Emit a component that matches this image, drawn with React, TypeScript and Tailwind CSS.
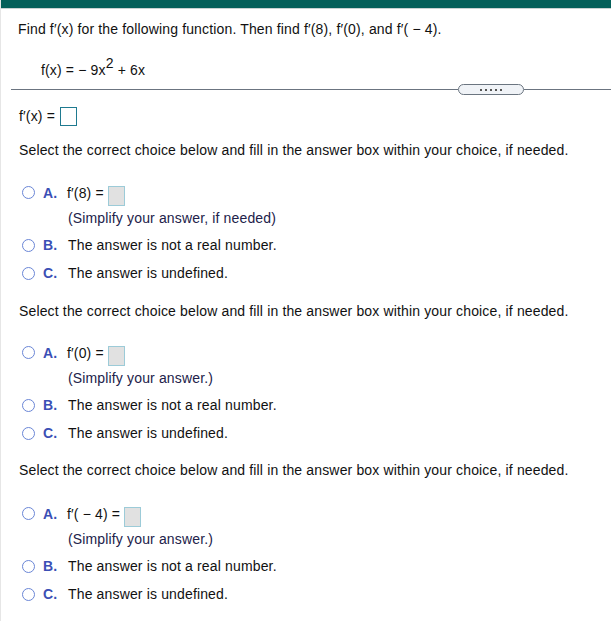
import React from 'react';

// One sub-question: prompt line plus three radio choices
type Part = {
  arg: string;
  hint: string;
  gapTop: string; // space above the prompt
  gapA: string; // space between prompt and choice A
};

const parts: Part[] = [
  { arg: '8', hint: '(Simplify your answer, if needed)', gapTop: 'mt-[15px]', gapA: 'mt-[27px]' },
  { arg: '0', hint: '(Simplify your answer.)', gapTop: 'mt-[22px]', gapA: 'mt-[26px]' },
  { arg: '( − 4)', hint: '(Simplify your answer.)', gapTop: 'mt-[21px]', gapA: 'mt-[28px]' },
];

function Radio() {
  return <span className="block w-[13px] h-[13px] rounded-full border-[1.5px] border-[#6a86d6] bg-white shrink-0" />;
}

function Choice({ letter, text }: { letter: string; text: string }) {
  return (
    <div className="flex items-center h-[16px] pl-[21px]">
      <Radio />
      <span className="ml-[8px] w-[25px] font-bold text-[#3b4fb5]">{letter}</span>
      <span>{text}</span>
    </div>
  );
}

function Question({ part }: { part: Part }) {
  const isParen = part.arg.startsWith('(');
  return (
    <>
      <div className={`${part.gapTop} h-[16px] pl-[18px]`}>
        Select the correct choice below and fill in the answer box within your choice, if needed.
      </div>

      {/* choice A with answer box */}
      <div className={`${part.gapA} flex items-start h-[21px] pl-[21px]`}>
        <span className="mt-[1px]">
          <Radio />
        </span>
        <span className="ml-[8px] w-[24px] font-bold text-[#3b4fb5]">A.</span>
        <span className="whitespace-pre">
          f′{isParen ? part.arg : `(${part.arg})`} =
        </span>
        <span className="ml-[4px] mt-[1px] block w-[17px] h-[20px] bg-[#e1e1e1] border border-[#9ccbd8]" />
      </div>
      <div className="mt-[4px] h-[16px] pl-[67px] text-[#22224a]">{part.hint}</div>

      <div className="mt-[11px]">
        <Choice letter="B." text="The answer is not a real number." />
      </div>
      <div className="mt-[12px]">
        <Choice letter="C." text="The answer is undefined." />
      </div>
    </>
  );
}

export default function App() {
  return (
    <div
      className="w-[611px] h-[621px] bg-white text-[14px] tracking-[0.15px] leading-[16px] text-[#111] border-l border-[#e6e6e6] overflow-hidden"
      style={{ fontFamily: '"Liberation Sans", Arial, sans-serif' }}
    >
      <div className="h-[8px] bg-[#04605a]" />
      <div className="h-[1px] bg-[#c9d2d2]" />

      <div className="h-[40px] flex items-center pl-[17px]">
        Find f′(x) for the following function. Then find f′(8), f′(0), and f′( − 4).
      </div>

      <div className="pt-[13px] h-[29px] pl-[40px] whitespace-pre">
        f(x) = − 9x<span className="relative -top-[7px] leading-none">2</span> + 6x
      </div>

      {/* divider with collapse handle */}
      <div className="mt-[6px] h-[11px] flex items-center pl-[10px]">
        <div className="w-[447px] h-[1px] bg-[#6b7480]" />
        <div className="w-[66px] h-[11px] rounded-full border border-[#6b7580] bg-[#f0f3f7] flex items-center justify-center gap-[3px]">
          <span className="w-[2px] h-[2px] bg-[#555]" />
          <span className="w-[2px] h-[2px] bg-[#555]" />
          <span className="w-[2px] h-[2px] bg-[#555]" />
          <span className="w-[2px] h-[2px] bg-[#555]" />
          <span className="w-[2px] h-[2px] bg-[#555]" />
        </div>
        <div className="flex-1 h-[1px] bg-[#6b7480]" />
      </div>

      <div className="mt-[10px] h-[22px] flex items-center pl-[18px]">
        <span>f′(x) =</span>
        <span className="ml-[5px] block w-[17px] h-[19px] border-[1.5px] border-[#1f7a90]" />
      </div>

      {parts.map((p) => (
        <Question key={p.arg} part={p} />
      ))}
    </div>
  );
}
